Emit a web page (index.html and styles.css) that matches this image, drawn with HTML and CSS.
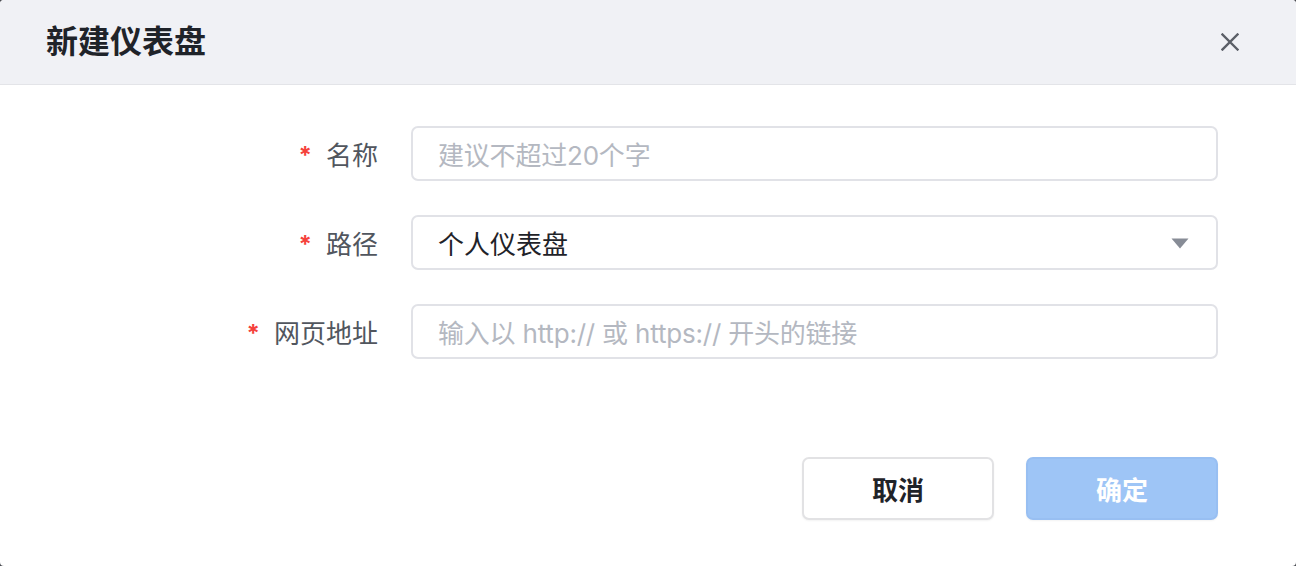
FILE: index.html
```html
<!DOCTYPE html>
<html lang="zh-CN">
<head>
<meta charset="utf-8">
<title>新建仪表盘</title>
<link rel="stylesheet" href="styles.css">
</head>
<body>
<div class="dialog">
  <div class="dialog-header">
    <h1 class="dialog-title">新建仪表盘</h1>
    <button class="close-btn" aria-label="关闭">
      <svg width="18" height="18" viewBox="0 0 18 18"><path d="M1.5 1.5 L16.5 16.5 M16.5 1.5 L1.5 16.5" stroke="#5b5f67" stroke-width="2.4" stroke-linecap="square" fill="none"/></svg>
    </button>
  </div>
  <div class="dialog-body">
    <div class="form">
      <label class="form-label"><span class="req">*</span>名称</label>
      <div class="input"><span class="placeholder">建议不超过20个字</span></div>

      <label class="form-label"><span class="req">*</span>路径</label>
      <div class="input select"><span class="value">个人仪表盘</span>
        <svg class="caret" width="18" height="11" viewBox="0 0 18 11"><path d="M0.5 0.5 H17.5 L9 10.5 Z" fill="#878c96"/></svg>
      </div>

      <label class="form-label"><span class="req">*</span>网页地址</label>
      <div class="input"><span class="placeholder">输入以 http:// 或 https:// 开头的链接</span></div>
    </div>
  </div>
  <div class="dialog-footer">
    <button class="btn btn-default">取消</button>
    <button class="btn btn-primary">确定</button>
  </div>
</div>
</body>
</html>
```

FILE: styles.css
```css
* { box-sizing: border-box; }
html, body {
  margin: 0;
  padding: 0;
  background: #4a4c52;
}
body {
  font-family: "Inter", "Noto Sans CJK SC", sans-serif;
  width: 1296px;
  height: 566px;
  overflow: hidden;
}
.dialog {
  width: 1296px;
  height: 566px;
  background: #ffffff;
  border-radius: 4px;
  overflow: hidden;
  display: flex;
  flex-direction: column;
}
.dialog-header {
  height: 85px;
  flex: none;
  background: #f0f1f5;
  border-bottom: 1px solid #e3e4e8;
  display: flex;
  align-items: center;
  justify-content: space-between;
  padding: 0 57px 0 46px;
}
.dialog-title {
  margin: 0;
  font-size: 32px;
  font-weight: 700;
  color: #1f2329;
  line-height: 1;
  letter-spacing: 0;
}
.close-btn {
  border: 0;
  background: transparent;
  padding: 0;
  width: 18px;
  height: 18px;
  display: flex;
  cursor: pointer;
}
.dialog-body {
  flex: 1;
  padding: 41px 78px 0 0;
}
.form {
  display: grid;
  grid-template-columns: 378px 1fr;
  column-gap: 33px;
  row-gap: 34px;
}
.form-label {
  display: flex;
  align-items: center;
  justify-content: flex-end;
  font-size: 26px;
  color: #51565e;
  height: 55px;
}
.req {
  color: #f5423c;
  font-weight: 700;
  font-size: 24px;
  margin-right: 14px;
  position: relative;
  top: 2px;
}
.input {
  height: 55px;
  border: 2px solid #e1e2e7;
  border-radius: 7px;
  display: flex;
  align-items: center;
  padding: 0 27px 0 25px;
  font-size: 26px;
  background: #fff;
}
.placeholder {
  color: #b4b8c1;
  letter-spacing: -0.2px;
}
.value {
  color: #1f2329;
}
.select {
  justify-content: space-between;
}
.caret {
  display: block;
  margin-top: 2px;
}
.dialog-footer {
  flex: none;
  display: flex;
  justify-content: flex-end;
  gap: 32px;
  padding: 0 78px 46px 0;
}
.btn {
  width: 192px;
  height: 63px;
  border-radius: 7px;
  font-family: "Inter", "Noto Sans CJK SC", sans-serif;
  font-size: 26px;
  font-weight: 700;
  cursor: pointer;
}
.btn-default {
  background: #ffffff;
  border: 2px solid #e2e2e4;
  color: #1f2329;
  box-shadow: 0 1px 2px rgba(0,0,0,0.05);
}
.btn-primary {
  background: #9ec5f6;
  border: 2px solid #98bff2;
  color: #ffffff;
  box-shadow: 0 1px 2px rgba(0,0,0,0.05);
}
```
